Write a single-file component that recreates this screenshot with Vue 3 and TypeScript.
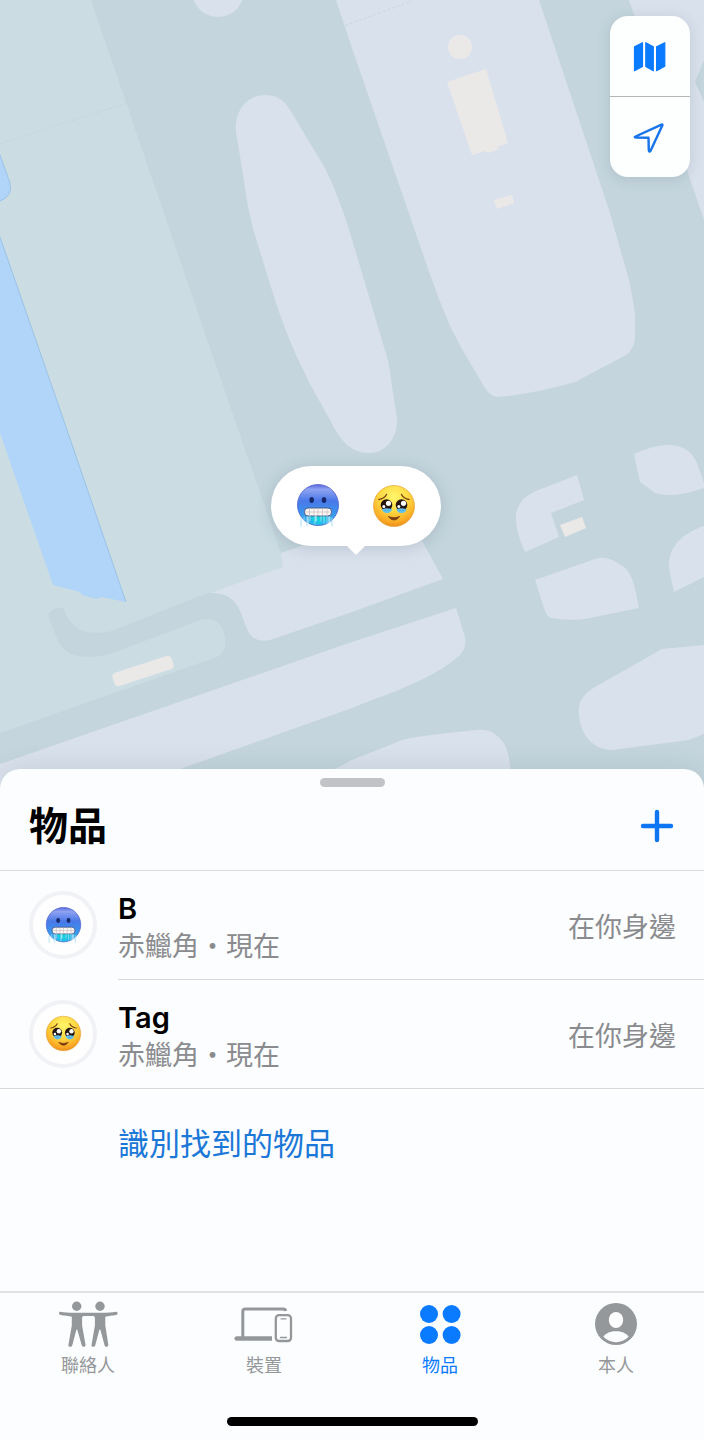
<script setup lang="ts">
import { ref } from 'vue'

interface Item {
  name: string
  place: string
  status: string
  face: string
}

interface Tab {
  id: string
  label: string
}

const items: Item[] = [
  { name: 'B', place: '赤鱲角・現在', status: '在你身邊', face: 'face-cold' },
  { name: 'Tag', place: '赤鱲角・現在', status: '在你身邊', face: 'face-tears' },
]

const tabs: Tab[] = [
  { id: 'people', label: '聯絡人' },
  { id: 'devices', label: '裝置' },
  { id: 'items', label: '物品' },
  { id: 'me', label: '本人' },
]

const active = ref<string>('items')
</script>

<template>
  <div class="app">
    <svg class="defs" aria-hidden="true">
      <defs>
        <linearGradient id="cold-fill" x1="0" y1="0" x2="0" y2="1">
          <stop offset="0" stop-color="#5a68de" />
          <stop offset="0.12" stop-color="#8fa3f2" />
          <stop offset="0.4" stop-color="#4a78e8" />
          <stop offset="0.68" stop-color="#3b92ec" />
          <stop offset="1" stop-color="#22c4ea" />
        </linearGradient>
        <radialGradient id="tears-fill" cx="0.5" cy="0.28" r="0.74">
          <stop offset="0" stop-color="#fff66b" />
          <stop offset="0.45" stop-color="#fedb45" />
          <stop offset="0.8" stop-color="#fbae26" />
          <stop offset="1" stop-color="#ec8a1c" />
        </radialGradient>
        <symbol id="face-cold" viewBox="0 0 44 46">
          <circle cx="22" cy="22" r="20.5" fill="url(#cold-fill)" stroke="#4b5fca" stroke-width="0.8" />
          <path d="M13 33h18l-2 6-3-3-2 5-3-3-3 2z" fill="#16d0df" />
          <ellipse cx="15.7" cy="17" rx="2.3" ry="2.9" fill="#19296e" />
          <ellipse cx="28" cy="17" rx="2.3" ry="2.9" fill="#19296e" />
          <rect x="8.5" y="25" width="27" height="8" rx="3.5" fill="#fbf7f5" stroke="#4a5b86" stroke-width="1" />
          <path d="M9 29h26M13.5 25.5v7M18 25.5v7M22 25.5v7M26.5 25.5v7M31 25.5v7" stroke="#c8b6b8" stroke-width="0.7" />
          <path d="M5 36v7M8 34v4M11 34v9M14 33v5M19 33v8M25 33v5M28 33v7M31 33v8M34 34v5M36 35v8" stroke="#9fdcf5" stroke-width="0.9" stroke-linecap="round" />
          <path d="M12 34v8M20 33v5M33 34v6" stroke="#e9fbff" stroke-width="0.9" stroke-linecap="round" />
        </symbol>
        <symbol id="face-tears" viewBox="0 0 44 46">
          <circle cx="22" cy="23" r="20.5" fill="url(#tears-fill)" stroke="#dd9a2e" stroke-width="0.6" />
          <path d="M7 16.5c3.500-.5 6-2 7.500-5M37 16.5c-3.500-.5-6-2-7.500-5" fill="none" stroke="#7a4310" stroke-width="1.4" stroke-linecap="round" />
          <path d="M10 25.500h10c0 2.500-2 4.500-5 4.500s-5-2-5-4.500zM24.500 25.500h10c0 2.500-2 4.500-5 4.500s-5-2-5-4.500z" fill="#5fc3f1" />
          <circle cx="14.500" cy="22" r="5.800" fill="#231512" />
          <circle cx="29.500" cy="22" r="5.800" fill="#231512" />
          <path d="M10 26.300c3-1.500 6.500-1.500 9.500 0-1.500 2.200-8 2.200-9.500 0zM24.700 26.300c3-1.500 6.500-1.500 9.500 0-1.500 2.200-8 2.200-9.500 0z" fill="#62bdea" />
          <circle cx="16.500" cy="20.300" r="2.600" fill="#fff" />
          <circle cx="31.500" cy="20.300" r="2.600" fill="#fff" />
          <circle cx="11.800" cy="23.600" r="1.500" fill="#fff" />
          <circle cx="26.800" cy="23.600" r="1.500" fill="#fff" />
          <path d="M16.500 33.500c3 4.500 8 4.500 11 0-3 1.800-8 1.800-11 0z" fill="#7a3d12" stroke="#7a3d12" stroke-width="1" stroke-linejoin="round" />
        </symbol>
      </defs>
    </svg>

    <main class="map" aria-label="地圖">
      <svg class="terrain" viewBox="0 0 704 789" preserveAspectRatio="xMidYMid slice" aria-hidden="true">
        <rect width="704" height="789" fill="#c4d5dd" />
        <path fill="#cbdce3" d="M0 0H91L221 380L281 553L285 567L210 593L197 597L112 631Q97 635 83 631Q70 626 63 608Q54 606 48 615L57 639Q62 651 74 655Q90 660 113 653L200 620Q217 616 223 630Q230 650 217 657L0 733Z" />
        <g fill="#d9e1ec">
          <circle cx="218" cy="-9" r="26" />
          <path d="M236 132C234 109 248 95 265 95C277 95 285 101 290 110L325 168C336 191 345 215 353 243L387 357C391 372 391 383 393 393L397 418C398 439 385 453 369 453Q357 453 347 445Q337 435 330 420L310 384L297 357Q284 328 275 300L254 232Q247 205 245 187Z" />
          <path d="M336 0L352 48L425 260C434 286 443 311 452 330L462 349L485 388Q490 396 497 397C523 395 550 389 575 382L626 355Q635 348 635 337V315Q632 291 627 273L610 213L539 0Z" />
          <path d="M629 0H704V60L695 82L704 102V220Z" />
          <path d="M281 553L357 526L415 528L443 579L352 612L270 640Q255 643 249 633C244 623 241 611 237 605Q228 592 210 593L283 567Z" />
          <path d="M0 764L352 642L456 608L465 637Q467 648 459 656Q445 668 425 678C402 690 376 698 352 708L183 768L130 789H0Z" />
          <path d="M285 789L337 768L352 760L405 739Q420 736 475 730Q489 729 496 735Q509 744 510 768V789Z" />
          <path d="M704 645L662 649L595 687Q576 698 579 715C581 740 598 750 612 750L689 740L704 734Z" />
          <path d="M634 454C658 443 686 438 697 463L704 483V488Q673 499 655 493L640 482Z" />
          <path d="M577 475L584 500L551 513L559 537L525 552Q516 532 516 520C515 502 528 493 544 488Z" />
          <path d="M535 580L595 559Q606 555 619 564C633 570 635 588 639 608L585 619Q565 621 551 618Q546 616 544 608Z" />
          <path d="M704 526C679 534 665 551 670 574L674 592L704 577Z" />
        </g>
        <g fill="#ebe9e8">
          <circle cx="460" cy="47" r="12" />
          <path d="M447 82L486 69L508 143L497 147L500 149L488 153L485 151L472 155Z" />
          <path d="M494 200L512 195L514 203L497 209Z" />
          <path d="M560 525L582 517L586 528L565 537Z" />
          <rect x="112" y="664" width="62" height="14" rx="4" transform="rotate(-18 143 671)" />
        </g>
        <g fill="#b0d5f8">
          <path d="M0 155L10 183Q13 196 0 201Z" />
          <path d="M0 237L56 398L126 602L101 597L97 599L82 595L80 592L53 585L0 433Z" />
        </g>
        <path fill="none" stroke="#8dbae2" d="M0 155L10 183Q13 196 0 201M0 237L56 398L126 602" stroke-width="0.7" />
        <path fill="none" stroke="#c6d1e0" stroke-dasharray="3 2" d="M0 144L127 103L352 23L412 1" stroke-width="0.8" />
      </svg>

      <div class="controls">
        <button type="button" aria-label="地圖模式">
          <svg width="34" height="32" viewBox="0 0 34 32" fill="#0a7aff" stroke="#0a7aff" stroke-width="1.2" stroke-linejoin="round">
            <path d="M1.500 6.700L9.500 2.700V26.500L1.500 30.700zM12.800 2.700L20.300 6.700V30.700L12.800 26.500zM23.600 6.700L31.800 2.700V26.300L23.600 30.700z" />
          </svg>
        </button>
        <button type="button" aria-label="目前位置">
          <svg width="34" height="32" viewBox="0 0 34 32" fill="none" stroke="#1774ea" stroke-width="2.400" stroke-linejoin="round">
            <path d="M2.500 15.500L28.500 3.700Q30 3 29.300 4.500L17.800 29.300Q16.300 31.800 15.800 29.300L15.500 16.800L2.500 16.500Q.9 16.200 2.500 15.500z" />
          </svg>
        </button>
      </div>

      <button class="callout" type="button" aria-label="B、Tag">
        <svg v-for="item in items" :key="item.name" width="44" height="46"><use :href="'#' + item.face" /></svg>
      </button>
    </main>

    <section class="sheet">
      <div class="grabber"></div>
      <header class="head">
        <h1>物品</h1>
        <button type="button" aria-label="加入物品">
          <svg width="34" height="34" viewBox="0 0 34 34" fill="none" stroke="#0f76f3" stroke-width="4.400" stroke-linecap="round">
            <path d="M3 17H31M17 3V31" />
          </svg>
        </button>
      </header>

      <ul class="list">
        <li v-for="item in items" :key="item.name">
          <button class="row" type="button">
            <span class="avatar"><svg width="37" height="39"><use :href="'#' + item.face" /></svg></span>
            <span class="body">
              <span class="info">
                <span class="name">{{ item.name }}</span>
                <span class="place">{{ item.place }}</span>
              </span>
              <span class="status">{{ item.status }}</span>
            </span>
          </button>
        </li>
      </ul>

      <a class="identify" href="#identify">識別找到的物品</a>
    </section>

    <nav class="tabs">
      <div class="tab-row">
        <button
          v-for="tab in tabs"
          :key="tab.id"
          type="button"
          :class="{ on: tab.id === active }"
          @click="active = tab.id"
        >
          <svg v-if="tab.id === 'people'" width="60" height="48" viewBox="0 0 60 48" fill="currentColor">
            <circle cx="18.700" cy="6.300" r="4.700" />
            <circle cx="42" cy="6.300" r="4.700" />
            <path d="M2.300 11.800C7 12.600 13 13 18.700 12.800H42C48 13 53 12.600 57.700 11.800C60 11.500 60.300 14.500 58.200 15.100C54 15.800 50.500 16 47.300 16.800V25.500L50.300 44.600C50.500 47.200 47.300 47.700 46.600 45.400L42.600 30.500C42.300 29.300 41.500 29.300 41.200 30.500L37.200 45.400C36.500 47.700 33 47.200 33.600 44.600L36.900 25.500V18C36.900 16.600 36 16 34.500 16H26.500C25 16 24.100 16.600 24.100 18V25.500L27.500 44.600C28 47.200 24.500 47.700 23.800 45.400L19.500 30.500C19.200 29.300 18.500 29.300 18.200 30.500L14.200 45.400C13.500 47.700 9.900 47.200 10.500 44.600L13.800 25.500V16.800C10.500 16 6.500 15.800 2.600 15.100C.5 14.500 .6 11.500 2.300 11.800Z" />
          </svg>
          <svg v-else-if="tab.id === 'devices'" width="60" height="48" viewBox="0 0 60 48" fill="none" stroke="currentColor">
            <path d="M8.800 37V11.500Q8.800 9 11.300 9H49Q51.500 9 51.700 11" stroke-width="3" />
            <path d="M2.800 36.200H38V40.800H2.800Q.4 40.700 .4 38.500Q.4 36.300 2.800 36.200Z" fill="currentColor" stroke="none" />
            <rect x="41.800" y="15.200" width="15.200" height="25.800" rx="3.200" stroke-width="2.300" />
            <path d="M47 18.800h5M46.500 37.500h6" stroke-width="1.300" stroke-linecap="round" />
          </svg>
          <svg v-else-if="tab.id === 'items'" width="60" height="48" viewBox="0 0 60 48" fill="currentColor">
            <circle cx="19" cy="14" r="9" />
            <circle cx="41.600" cy="14" r="9" />
            <circle cx="19" cy="35" r="9" />
            <circle cx="41.600" cy="35" r="9" />
          </svg>
          <svg v-else width="60" height="48" viewBox="0 0 60 48">
            <circle cx="30" cy="24" r="21" fill="currentColor" />
            <ellipse cx="30" cy="20" rx="7.200" ry="8" fill="#fcfdfe" />
            <path d="M17.300 36.800C22 29.500 38 29.500 42.700 36.800Q37 42.200 30 42.200Q23 42.200 17.300 36.800Z" fill="#fcfdfe" />
          </svg>
          <span>{{ tab.label }}</span>
        </button>
      </div>
      <div class="home"></div>
    </nav>
  </div>
</template>

<style>
body {
  margin: 0;
  background: #fcfdfe;
}
</style>

<style scoped>
.app {
  display: flex;
  flex-direction: column;
  min-height: 100vh;
  font-family: Inter, "Noto Sans CJK TC", sans-serif;
  color: #000;
}

.defs {
  position: absolute;
  width: 0;
  height: 0;
}

button {
  margin: 0;
  padding: 0;
  border: 0;
  background: none;
  font: inherit;
  color: inherit;
  cursor: pointer;
}

svg {
  display: block;
}

.map {
  position: relative;
  flex: 1;
  min-height: 480px;
  overflow: hidden;
}

.terrain {
  position: absolute;
  inset: 0;
  width: 100%;
  height: 100%;
}

.controls {
  position: absolute;
  top: 16px;
  right: 14px;
  width: 80px;
  border-radius: 18px;
  background: #fdfefe;
  box-shadow: 0 2px 14px rgba(60, 80, 100, 0.16);
}

.controls button {
  display: flex;
  align-items: center;
  justify-content: center;
  width: 100%;
  height: 80px;
}

.controls button + button {
  border-top: 1px solid #b3b5b8;
  height: 81px;
}

.callout {
  position: absolute;
  left: 50.6%;
  top: 59%;
  display: flex;
  align-items: center;
  justify-content: center;
  gap: 32px;
  width: 170px;
  height: 80px;
  border-radius: 40px;
  background: #fff;
  transform: translateX(-50%);
  box-shadow: 0 2px 16px rgba(60, 80, 100, 0.2);
}

.callout::after {
  content: "";
  position: absolute;
  top: 100%;
  left: 50%;
  margin-left: -9px;
  border: 9px solid transparent;
  border-top-color: #fff;
  border-bottom: 0;
}

.sheet {
  position: relative;
  display: flex;
  flex-direction: column;
  min-height: 522px;
  margin-top: -20px;
  border-radius: 20px 20px 0 0;
  background: #fcfdfe;
  box-shadow: 0 -2px 24px rgba(60, 80, 100, 0.12);
}

.grabber {
  align-self: center;
  width: 65px;
  height: 9px;
  margin-top: 9px;
  border-radius: 5px;
  background: #c2c3c6;
}

.head {
  display: flex;
  align-items: center;
  justify-content: space-between;
  height: 78px;
  padding: 0 30px 5px 29px;
  border-bottom: 1px solid #d9dbe0;
}

.head h1 {
  margin: 0;
  font-size: 39px;
  line-height: 56px;
  font-weight: 700;
}

.list {
  margin: 0;
  padding: 0;
  list-style: none;
  border-bottom: 1px solid #d6d9dd;
}

.row {
  display: flex;
  align-items: center;
  width: 100%;
  height: 108px;
  padding-left: 29px;
  gap: 21px;
  text-align: left;
}

li + li .body {
  border-top: 1px solid #d6d9dd;
}

li + li .row {
  height: 109px;
}

.avatar {
  display: flex;
  flex: none;
  align-items: center;
  justify-content: center;
  box-sizing: border-box;
  width: 68px;
  height: 68px;
  border: 4px solid #f1f2f6;
  border-radius: 50%;
  background: #fefefe;
}

.body {
  display: flex;
  flex: 1;
  align-items: center;
  justify-content: space-between;
  box-sizing: border-box;
  height: 100%;
  padding: 5px 28px 0 0;
}

.info {
  display: flex;
  flex-direction: column;
}

.name {
  font-size: 29px;
  line-height: 38px;
  font-weight: 600;
}

.place,
.status {
  font-size: 27px;
  line-height: 38px;
  color: #8a8b8e;
}

.identify {
  align-self: flex-start;
  margin: 33px 0 0 118px;
  font-size: 31px;
  line-height: 44px;
  color: #1b78d8;
  text-decoration: none;
}

.tabs {
  position: relative;
  display: flex;
  flex-direction: column;
  align-items: center;
  height: 147px;
  border-top: 2px solid #dfe1e5;
  background: #fcfdfe;
}

.tab-row {
  display: grid;
  grid-template-columns: repeat(4, 1fr);
  width: 100%;
}

.tab-row button {
  display: flex;
  flex-direction: column;
  align-items: center;
  padding-top: 7px;
  font-size: 18px;
  line-height: 28px;
  color: #95989b;
}

.tab-row button span {
  margin-top: 4px;
}

.tab-row .on {
  color: #0a7aff;
}

.home {
  width: 251px;
  height: 9px;
  margin-top: auto;
  margin-bottom: 14px;
  border-radius: 5px;
  background: #000;
}
</style>
